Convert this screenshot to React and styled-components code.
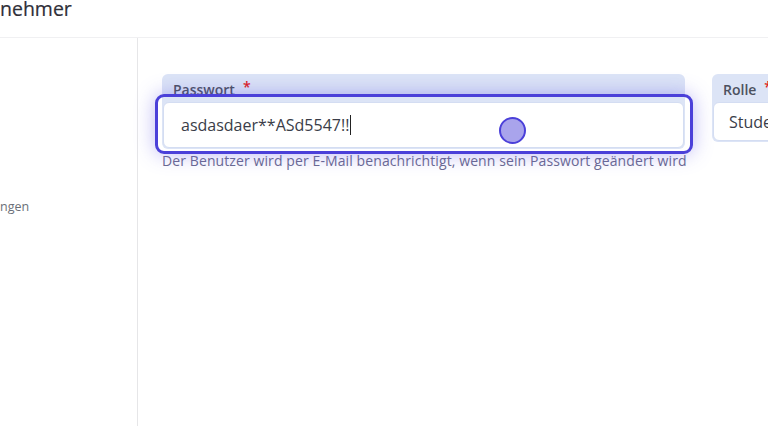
import styled, { createGlobalStyle } from 'styled-components'

const Global = createGlobalStyle`
  html, body {
    margin: 0;
    padding: 0;
    background: #fff;
    overflow: hidden;
  }
  body {
    font-family: "Open Sans", "Noto Sans", sans-serif;
    color: #333;
  }
`

const Page = styled.div`
  width: 768px;
  height: 426px;
  display: flex;
  flex-direction: column;
  overflow: hidden;
`

const Header = styled.header`
  height: 38px;
  box-sizing: border-box;
  border-bottom: 1px solid #f0f0f2;
  display: flex;
  align-items: flex-start;
`

const Title = styled.h1`
  margin: -3px 0 0 0;
  font-size: 19.5px;
  line-height: 24px;
  font-weight: 500;
  color: #2f2f38;
  -webkit-text-stroke: 0.2px #2f2f38;
`

const Body = styled.div`
  flex: 1;
  display: flex;
`

const Sidebar = styled.aside`
  width: 138px;
  flex-shrink: 0;
  border-right: 1px solid #e6e6e8;
  padding-top: 160px;
  box-sizing: border-box;
`

const NavItem = styled.div`
  font-size: 12.5px;
  line-height: 18px;
  color: #6b6f78;
`

const Content = styled.main`
  flex: 1;
  padding: 36px 0 0 24px;
  position: relative;
`

const Form = styled.div`
  display: grid;
  grid-template-columns: 523px 523px;
  column-gap: 27px;
  align-items: start;
`

const Field = styled.div`
  display: flex;
  flex-direction: column;
  position: relative;
`

const Card = styled.div`
  background: #dce4f6;
  border-radius: 6px;
  padding: 0 1px 1px;
  display: flex;
  flex-direction: column;
`

const Label = styled.label`
  height: 28px;
  display: flex;
  align-items: center;
  padding: 2px 10px 0;
  box-sizing: border-box;
  font-size: 14px;
  font-weight: 600;
  color: #4c5160;
`

const Star = styled.span`
  color: #e02020;
  margin-left: 8px;
  position: relative;
  top: -3px;
`

const Input = styled.div`
  height: ${p => p.$h}px;
  box-sizing: border-box;
  background: #fff;
  border: 1px solid #d4ddf2;
  border-radius: 6px;
  display: flex;
  align-items: center;
  padding-left: ${p => p.$pad}px;
  font-size: 16px;
  color: #3a3d48;
`

const Caret = styled.span`
  display: inline-block;
  width: 1px;
  height: 20px;
  background: #222;
  margin-left: 1px;
`

const Help = styled.div`
  margin-top: 3px;
  font-size: 14px;
  letter-spacing: 0.1px;
  line-height: 18px;
  color: #6b6a90;
  white-space: nowrap;
`

const Highlight = styled.div`
  position: absolute;
  left: -7px;
  right: -8px;
  top: 20px;
  height: 60px;
  box-sizing: border-box;
  border: 3px solid #4b40d9;
  border-radius: 9px;
  box-shadow: 0 0 20px rgba(90, 80, 230, 0.4);
  pointer-events: none;
`

const Pointer = styled.div`
  position: absolute;
  left: 337px;
  top: 43px;
  width: 27px;
  height: 27px;
  box-sizing: border-box;
  border-radius: 50%;
  background: #a9a4ec;
  border: 2.5px solid #4b40d9;
`

export default function App() {
  return (
    <>
      <Global />
      <Page>
        <Header>
          <Title>nehmer</Title>
        </Header>
        <Body>
          <Sidebar>
            <NavItem>ngen</NavItem>
          </Sidebar>
          <Content>
            <Form>
              <Field>
                <Card>
                  <Label>Passwort<Star>*</Star></Label>
                  <Input $h={46} $pad={17}>
                    asdasdaer**ASd5547!!<Caret />
                  </Input>
                </Card>
                <Help>Der Benutzer wird per E-Mail benachrichtigt, wenn sein Passwort geändert wird</Help>
                <Highlight />
                <Pointer />
              </Field>
              <Field>
                <Card>
                  <Label>Rolle<Star>*</Star></Label>
                  <Input $h={39} $pad={15}>Student</Input>
                </Card>
              </Field>
            </Form>
          </Content>
        </Body>
      </Page>
    </>
  )
}
